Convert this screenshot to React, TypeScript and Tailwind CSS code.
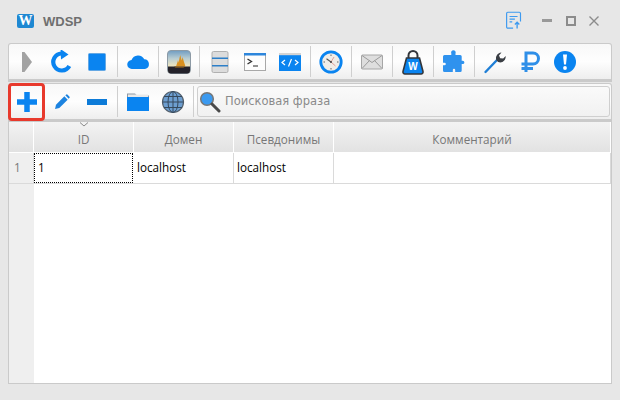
import type { ReactNode } from 'react';

const BLUE = '#0a84f0';

function Sep() {
  return (
    <div className="flex w-[6px] shrink-0 justify-center">
      <div className="h-[31px] w-px bg-[#cfcfcf]" />
    </div>
  );
}

function Btn({ children, boxed }: { children: ReactNode; boxed?: boolean }) {
  return (
    <div className="relative flex h-[32px] w-[35px] shrink-0 items-center justify-center">
      {children}
      {boxed && <div className="absolute -top-[3px] left-[-1px] h-[38px] w-[37px] rounded-[4px] border-[3px] border-[#e8392c]" />}
    </div>
  );
}

function Icon({ children, size = 24 }: { children: ReactNode; size?: number }) {
  return (
    <svg width={size} height={size} viewBox="0 0 24 24" fill="none">
      {children}
    </svg>
  );
}

const Play = () => (
  <Icon><path d="M7 2v20h2.500l7.500-10-7.500-10z" fill="#a3a3a3" /></Icon>
);
const Refresh = () => (
  <Icon>
    <path d="M19.300 16A8.500 8.500 0 1 1 11.500 3.500" stroke={BLUE} strokeWidth="4.200" />
    <path d="M10.500 -1l8 5.500-7.500 5z" fill={BLUE} />
  </Icon>
);
const Stop = () => (
  <Icon><rect x="3.500" y="3.500" width="17" height="17" rx="1" fill={BLUE} stroke="#64a8e4" /></Icon>
);
const Cloud = () => (
  <Icon>
    <path d="M6 19a4.500 4.500 0 0 1-.5-9A7 7 0 0 1 18.300 9.300 4.900 4.900 0 0 1 19 19z" fill={BLUE} />
  </Icon>
);
const Ship = () => (
  <svg width="24" height="24" viewBox="0 0 24 24">
    <defs>
      <linearGradient id="sky" x1="0" y1="0" x2="0" y2="1">
        <stop offset="0" stopColor="#6f9cc2" />
        <stop offset="0.35" stopColor="#b9cdd2" />
        <stop offset="0.7" stopColor="#f1e6bd" />
      </linearGradient>
    </defs>
    <rect x="0.500" y="0.500" width="23" height="23" rx="3.500" fill="url(#sky)" stroke="#8d9aa5" />
    <path d="M1 16.500h22v4a3 3 0 0 1-3 3H4a3 3 0 0 1-3-3z" fill="#24222a" />
    <path d="M9 16.500l1.500-4.500.5-2 .7 2.500.8-4.500.8-3 .7 3 .8 2.500.7-3.500 1.500 5 1.500 4.500z" fill="#d9901f" />
    <path d="M7 16.500h11l-1.500 1.500H8.500z" fill="#6b4a20" />
  </svg>
);
const Db = () => (
  <Icon>
    <rect x="4" y="1.500" width="16" height="21" rx="1.500" fill="#dcdcdc" stroke="#b0b0b0" />
    <rect x="4" y="7.500" width="16" height="1.500" fill="#2d7fc8" />
    <rect x="4" y="15" width="16" height="1.500" fill="#2d7fc8" />
  </Icon>
);
const Terminal = () => (
  <Icon>
    <rect x="1.500" y="3.500" width="21" height="17" fill="#fdfdfd" stroke="#a8a8a8" />
    <rect x="1" y="3" width="22" height="2.500" fill="#2d86dc" />
    <path d="M4.500 9l4 2.500-4 2.500" stroke="#333" strokeWidth="1.300" />
    <path d="M10 16h5" stroke="#555" strokeWidth="1.300" />
  </Icon>
);
const Code = () => (
  <svg width="24" height="24" viewBox="0 0 24 24">
    <rect x="1" y="3" width="22" height="18" fill={BLUE} />
    <rect x="1" y="3" width="22" height="2.200" fill="#d4d4d4" />
    <path d="M7 10l-3 2.500 3 2.500M17 10l3 2.500-3 2.500M13.500 9l-3 7.500" stroke="#fff" strokeWidth="1.200" fill="none" />
  </svg>
);
const Clock = () => (
  <Icon>
    <circle cx="12" cy="12" r="10.200" fill="#f0ede8" stroke={BLUE} strokeWidth="2.800" />
    <path d="M12 4.500v1.500M12 18v1.500M4.500 12h1.500M18 12h1.500" stroke="#666" />
    <path d="M12 12L7.500 8.800" stroke="#555" strokeWidth="1.100" />
    <path d="M12 12l4.500 4M12 12l3-5" stroke="#d98a80" strokeWidth="0.800" />
    <circle cx="12" cy="12" r="1" fill="#444" />
  </Icon>
);
const Mail = () => (
  <Icon>
    <rect x="1.500" y="5" width="21" height="14" rx="1" fill="#dedede" stroke="#a6a6a6" />
    <path d="M2 5.500l10 7 10-7M2 18.500l7.500-8M22 18.500l-7.500-8" stroke="#9b9b9b" />
  </Icon>
);
const Bag = () => (
  <svg width="24" height="26" viewBox="0 0 24 26">
    <path d="M7.500 12V6.500a4.500 4.500 0 0 1 9 0V12" stroke="#33363b" strokeWidth="2" fill="none" />
    <path d="M5.500 9h13l3.500 13.500a2 2 0 0 1-2 2.500H4a2 2 0 0 1-2-2.500z" fill={BLUE} stroke="#33363b" strokeWidth="1.600" />
    <text x="12" y="21" textAnchor="middle" fontSize="10" fontWeight="700" fill="#fff" fontFamily="'Liberation Sans', sans-serif">W</text>
  </svg>
);
const Puzzle = () => (
  <Icon>
    <path d="M2.500 5h6.800V3.500a2.300 2.300 0 1 1 4.200 0V5h4.700a1.500 1.500 0 0 1 1.500 1.500v4.200h1a1.700 1.700 0 1 1 0 3.400h-1v6.400a1.500 1.500 0 0 1-1.500 1.500h-5v-2a1.200 1.200 0 1 0-2.400 0v2H2.500A1.500 1.500 0 0 1 1 20.500v-5.200h1.500a1.300 1.300 0 1 0 0-2.600H1v-6.200A1.500 1.500 0 0 1 2.500 5z" fill="#2f92ee" />
  </Icon>
);
const Wrench = () => (
  <Icon>
    <path d="M2.500 22l11.500-12" stroke="#1f7fd6" strokeWidth="2.400" strokeLinecap="round" />
    <path d="M13.500 10.500c-1.500-3.500.5-7.500 5-8l-2.500 3 1.200 2.800 3 .2 2.500-2.500c.3 4.500-3.500 7.500-7.500 6z" fill="#3b3f45" />
  </Icon>
);
const Ruble = () => (
  <Icon>
    <path d="M8 22V3h7a5.500 5.500 0 0 1 0 11H3.500M3.500 18.500H15" stroke="#2f8fe8" strokeWidth="3" />
  </Icon>
);
const Alert = () => (
  <svg width="24" height="24" viewBox="0 0 24 24">
    <circle cx="12" cy="12" r="11" fill={BLUE} />
    <path d="M10 4.500h4l-1 10h-2z" fill="#fff" />
    <circle cx="12" cy="18" r="1.900" fill="#fff" />
  </svg>
);
const Plus = () => (
  <Icon><path d="M12 2v20M2 12h20" stroke={BLUE} strokeWidth="5.500" /></Icon>
);
const Pencil = () => (
  <svg width="16" height="16" viewBox="0 0 24 24">
    <path d="M1.500 22.500l1.500-6.500L15.500 3.500l5 5L8 21z" fill="#1c83e0" />
    <path d="M17 2l1-1a1.800 1.800 0 0 1 2.400 0l2.600 2.600a1.800 1.800 0 0 1 0 2.400l-1 1z" fill="#1c83e0" />
  </svg>
);
const MinusBar = () => (
  <svg width="20" height="6" viewBox="0 0 20 6"><rect width="20" height="6" fill="#0d7bd8" /></svg>
);
const Folder = () => (
  <svg width="22" height="18" viewBox="0 0 22 18">
    <path d="M0 0.500h8l2 2h12v3H0z" fill="#8f9aa5" />
    <rect x="1" y="1.500" width="20" height="4" fill="#e9e9e9" />
    <rect y="4" width="22" height="14" fill={BLUE} />
  </svg>
);
const Globe = () => (
  <Icon>
    <circle cx="12" cy="12" r="10.500" fill="#6d9ed0" stroke="#54616e" strokeWidth="1.200" />
    <ellipse cx="12" cy="12" rx="5" ry="10.500" stroke="#36495c" />
    <path d="M12 1.500v21M1.500 12h21M3 6.500h18M3 17.500h18" stroke="#36495c" />
  </Icon>
);
const Search = () => (
  <svg width="22" height="22" viewBox="0 0 22 22">
    <circle cx="8" cy="8" r="6.300" fill="#3b9af0" stroke="#777" strokeWidth="1.500" />
    <path d="M13 13l7 7" stroke="#4a4a4a" strokeWidth="3" strokeLinecap="round" />
  </svg>
);

const Logo = () => (
  <div className="flex h-[14px] w-[17px] items-center justify-center rounded-[2px] bg-[#1e88d2] font-['Liberation_Serif',serif] text-[14px] font-bold leading-none text-white">
    W
  </div>
);

const NoteUp = () => (
  <svg width="16" height="19" viewBox="0 0 18 20" fill="none" stroke="#3d9af0" strokeWidth="1.300">
    <path d="M8 18.500H2a1.300 1.300 0 0 1-1.300-1.300V2A1.300 1.300 0 0 1 2 .7h13A1.300 1.300 0 0 1 16.300 2v9" />
    <path d="M4 5.500h9M4 8.500h6M4 11.500h3" />
    <path d="M12.500 19v-6.500M10 14.500l2.500-2.500 2.500 2.500" strokeWidth="1.500" />
  </svg>
);

const headers = [
  { label: 'ID', cls: 'w-[100px]' },
  { label: 'Домен', cls: 'w-[100px]' },
  { label: 'Псевдонимы', cls: 'w-[100px]' },
  { label: 'Комментарий', cls: 'flex-1' },
];

export default function App() {
  return (
    <div className="flex h-[400px] w-[620px] flex-col overflow-hidden bg-[#e7e7e7] font-['Open_Sans',sans-serif] text-[11.700px]">
      {/* Title bar */}
      <div className="flex h-[43px] shrink-0 items-center pb-[2px] pl-[17px] pr-[21px]">
        <Logo />
        <span className="ml-[9px] mt-[3px] font-['Liberation_Sans',sans-serif] text-[13px] font-bold text-[#6f6f6f]">WDSP</span>
        <div className="ml-auto flex items-center">
          <NoteUp />
          <div className="ml-[20px] flex items-center text-[#8c8c8c]">
            <div className="h-[3px] w-[10px] bg-[#999]" />
            <div className="ml-[14px] h-[10px] w-[10px] border-2 border-[#8c8c8c]" />
            <svg width="10" height="10" viewBox="0 0 10 10" className="ml-[13px]" stroke="#8c8c8c" strokeWidth="1.400">
              <path d="M.5.500l9 9M9.500.500l-9 9" />
            </svg>
          </div>
        </div>
      </div>

      {/* Main toolbar */}
      <div className="mx-[8px] flex h-[39px] shrink-0 items-center rounded-t-[3px] border border-b-[3px] border-[#cacaca] bg-gradient-to-b from-[#f8f8f8] via-[#fefefe] to-[#eeeeee]">
        <Btn><Play /></Btn>
        <Btn><Refresh /></Btn>
        <Btn><Stop /></Btn>
        <Sep />
        <Btn><Cloud /></Btn>
        <Sep />
        <Btn><Ship /></Btn>
        <Sep />
        <Btn><Db /></Btn>
        <Btn><Terminal /></Btn>
        <Btn><Code /></Btn>
        <Sep />
        <Btn><Clock /></Btn>
        <Sep />
        <Btn><Mail /></Btn>
        <Sep />
        <Btn><Bag /></Btn>
        <Sep />
        <Btn><Puzzle /></Btn>
        <Sep />
        <Btn><Wrench /></Btn>
        <Btn><Ruble /></Btn>
        <Btn><Alert /></Btn>
      </div>

      {/* Search toolbar */}
      <div className="mx-[8px] mt-[1px] flex h-[39px] shrink-0 items-center rounded-t-[3px] border border-b-[3px] border-[#cacaca] bg-gradient-to-b from-[#f8f8f8] via-[#fefefe] to-[#eeeeee]">
        <Btn boxed><Plus /></Btn>
        <Btn><Pencil /></Btn>
        <Btn><MinusBar /></Btn>
        <Sep />
        <Btn><Folder /></Btn>
        <Btn><Globe /></Btn>
        <Sep />
        <div className="ml-[1px] mr-[1px] flex h-[31px] flex-1 items-center rounded-[3px] border border-[#cfcfcf] bg-gradient-to-b from-[#fafafa] to-[#f1f1f1] pl-[1px]">
          <Search />
          <span className="ml-[4px] mt-[1px] font-['DejaVu_Sans',sans-serif] text-[11.500px] text-[#8a8a8a]">Поисковая фраза</span>
        </div>
      </div>

      {/* Table */}
      <div className="mx-[8px] flex h-[262px] shrink-0 border border-t-0 border-[#cacaca] bg-white">
        <div className="flex w-[25px] shrink-0 flex-col bg-[#efefef]">
          <div className="h-[31px] border-b border-r border-white bg-gradient-to-b from-[#f3f3f3] to-[#e2e2e2]" />
          <div className="flex h-[31px] items-center border-b border-r border-[#dadada] pl-[5px] text-[#777]">1</div>
        </div>
        <div className="flex min-w-0 flex-1 flex-col">
          <div className="flex h-[31px] shrink-0 border-b border-white bg-gradient-to-b from-[#f3f3f3] to-[#e2e2e2]">
            {headers.map((h, idx) => (
              <div
                key={h.label}
                className={`relative flex items-center justify-center border-r border-white pt-[5px] text-[#777] ${h.cls}`}
              >
                {idx === 0 && (
                  <svg width="10" height="5" viewBox="0 0 10 5" className="absolute left-[45px] top-[0px]" fill="none" stroke="#8a8a8a">
                    <path d="M1 .5l4 3.500 4-3.500" />
                  </svg>
                )}
                {h.label}
              </div>
            ))}
          </div>
          <div className="flex h-[31px] shrink-0 border-b border-[#dadada] text-black">
            <div className="flex w-[99px] items-center border border-dotted border-black pl-[3px]">1</div>
            <div className="flex w-[101px] items-center border-r border-[#dadada] pl-[4px]">localhost</div>
            <div className="flex w-[100px] items-center border-r border-[#dadada] pl-[3px]">localhost</div>
            <div className="flex-1 border-r border-[#dadada]" />
          </div>
        </div>
      </div>
    </div>
  );
}
